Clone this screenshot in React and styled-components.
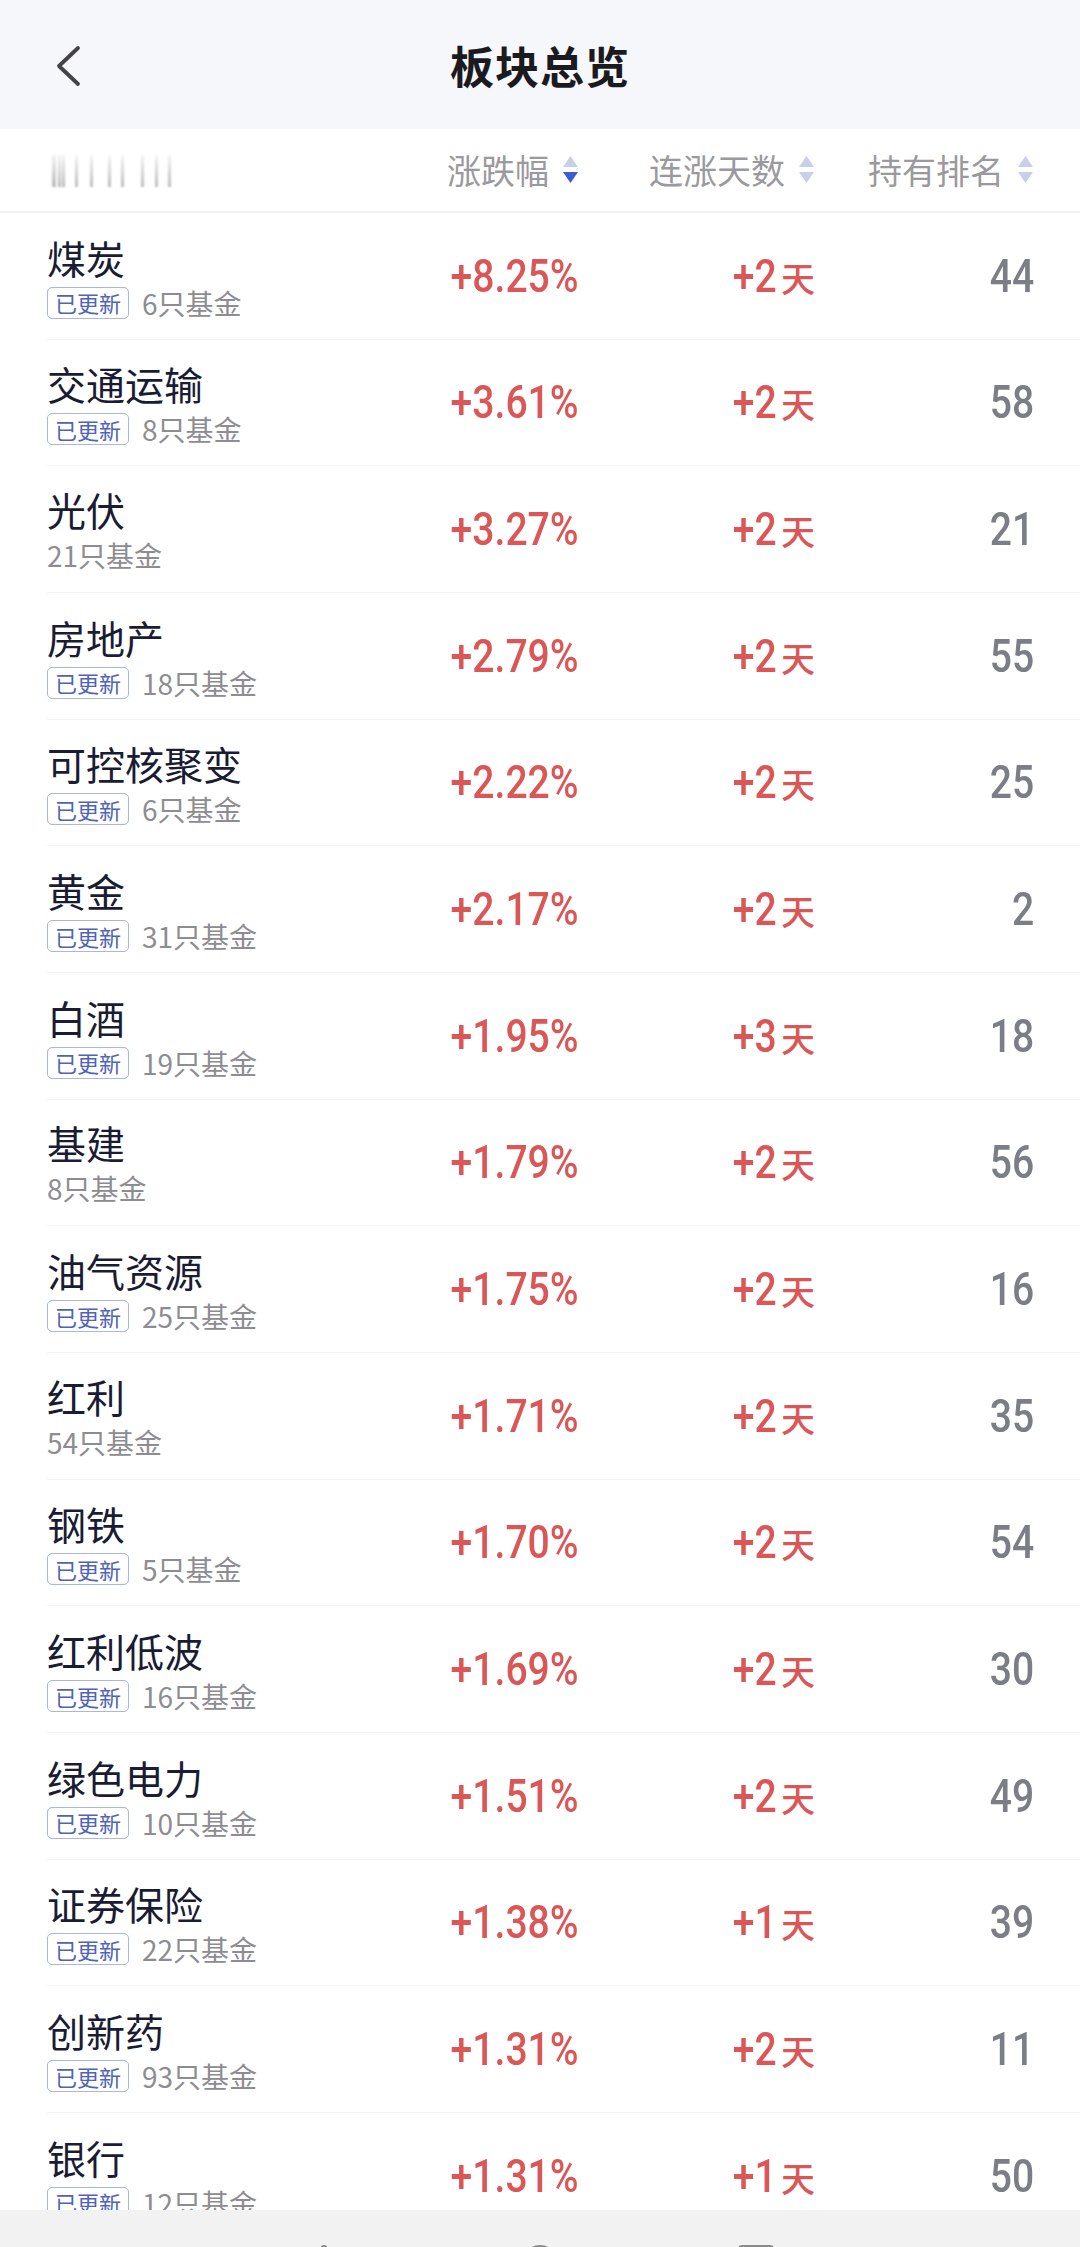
import React from "react";
import styled, { createGlobalStyle } from "styled-components";

const Global = createGlobalStyle`
  html, body { margin: 0; padding: 0; background: #ffffff; }
  body { font-family: "Noto Sans CJK SC", "Noto Sans", sans-serif; }
  * { box-sizing: border-box; }
`;

const Page = styled.div`
  width: 1080px;
  height: 2247px;
  display: flex;
  flex-direction: column;
  overflow: hidden;
  background: #fff;
`;

const TopBar = styled.header`
  height: 129px;
  flex: none;
  background: #f6f7fa;
  display: grid;
  grid-template-columns: 120px 1fr 120px;
  align-items: center;
`;

const BackButton = styled.div`
  padding-left: 56px;
  display: flex;
  align-items: center;
  height: 100%;
  padding-top: 2px;
`;

const Title = styled.h1`
  margin: 0;
  text-align: center;
  font-size: 44px;
  font-weight: 700;
  color: #1b1b1f;
  letter-spacing: 1px;
`;

const GRID = "1fr 200px 236px 219px";

const HeadRow = styled.div`
  flex: none;
  height: 84px;
  display: grid;
  grid-template-columns: ${GRID};
  align-items: center;
  padding: 0 46px 0 50px;
  border-bottom: 2px solid #f0f1f3;
`;

const Blurred = styled.div`
  display: flex;
  align-items: flex-end;
  height: 34px;
  width: 124px;
  filter: blur(0.8px);
`;

const BlurBar = styled.span`
  width: ${(p) => p.w}px;
  margin-left: ${(p) => p.ml}px;
  height: 32px;
  background: linear-gradient(#f4f4f4, #b9b9b9);
`;

const HeadCell = styled.div`
  display: flex;
  justify-content: flex-end;
  align-items: center;
  gap: 13px;
  font-size: 34px;
  color: #9a9a9e;
  line-height: 1;
`;

const SortIcon = styled.svg`
  width: 17px;
  height: 30px;
  flex: none;
`;

const List = styled.div`
  flex: 1;
  overflow: hidden;
`;

const Row = styled.div`
  height: 126.67px;
  display: grid;
  grid-template-columns: ${GRID};
  align-items: center;
  margin-left: 47px;
  padding-right: 46px;
  border-bottom: 1.5px solid #f2f3f5;
`;

const NameCol = styled.div`
  display: flex;
  flex-direction: column;
  justify-content: center;
  gap: 10px;
  padding-top: ${(p) => (p.tag ? 4 : 2)}px;
`;

const Name = styled.div`
  font-size: 39px;
  line-height: 40px;
  color: #191c33;
`;

const Meta = styled.div`
  display: flex;
  align-items: center;
  gap: 13px;
  height: 32px;
`;

const Tag = styled.span`
  height: 32px;
  padding: 0 7px;
  border: 1.5px solid #a7b6e2;
  border-radius: 5px;
  color: #4f64b6;
  font-size: 22px;
  line-height: 29px;
  display: inline-flex;
  align-items: center;
`;

const Count = styled.span`
  font-size: 28px;
  color: #8d8d91;
  line-height: 1;
`;

const ValueCell = styled.div`
  display: flex;
  justify-content: flex-end;
  align-items: baseline;
  color: ${(p) => p.color};
`;

const Num = styled.span`
  display: inline-block;
  font-family: Roboto, "Noto Sans", sans-serif;
  font-size: 46px;
  font-weight: 500;
  line-height: 1;
  transform: scaleX(0.85);
  transform-origin: right center;
  margin-right: ${(p) => p.mr || 0}px;
`;

const Unit = styled.span`
  font-size: 34px;
  font-weight: 500;
  line-height: 1;
`;

const NavBar = styled.div`
  flex: none;
  height: 37px;
  background: #f2f2f3;
  overflow: hidden;
  display: flex;
  justify-content: center;
  gap: 180px;
  padding-top: 35px;
`;

const NavIcon = styled.span`
  width: 36px;
  height: 36px;
  border: 4px solid #8a8a8a;
  border-radius: ${(p) => p.r};
`;

const rows = [
  ["煤炭", true, 6, "+8.25%", "+2", 44],
  ["交通运输", true, 8, "+3.61%", "+2", 58],
  ["光伏", false, 21, "+3.27%", "+2", 21],
  ["房地产", true, 18, "+2.79%", "+2", 55],
  ["可控核聚变", true, 6, "+2.22%", "+2", 25],
  ["黄金", true, 31, "+2.17%", "+2", 2],
  ["白酒", true, 19, "+1.95%", "+3", 18],
  ["基建", false, 8, "+1.79%", "+2", 56],
  ["油气资源", true, 25, "+1.75%", "+2", 16],
  ["红利", false, 54, "+1.71%", "+2", 35],
  ["钢铁", true, 5, "+1.70%", "+2", 54],
  ["红利低波", true, 16, "+1.69%", "+2", 30],
  ["绿色电力", true, 10, "+1.51%", "+2", 49],
  ["证券保险", true, 22, "+1.38%", "+1", 39],
  ["创新药", true, 93, "+1.31%", "+2", 11],
  ["银行", true, 12, "+1.31%", "+1", 50],
];

const RED = "#db5757";
const GRAY = "#7c7e86";

function Sort({ active }) {
  return (
    <SortIcon viewBox="0 0 17 30">
      <path d="M8.5 1 L16 12 L1 12 Z" fill="#c9cfe9" />
      <path d="M1 17 L16 17 L8.5 28 Z" fill={active ? "#3d5cd1" : "#c9cfe9"} />
    </SortIcon>
  );
}

const bars = [
  [4, 2], [3, 2], [3, 1], [3, 10], [3, 12], [3, 15], [3, 10], [3, 17], [3, 11], [3, 10],
];

export default function App() {
  return (
    <Page>
      <Global />
      <TopBar>
        <BackButton>
          <svg width="26" height="42" viewBox="0 0 26 42">
            <polyline
              points="22,3 3,21 22,39"
              fill="none"
              stroke="#444446"
              strokeWidth="3.8"
              strokeLinecap="round"
              strokeLinejoin="round"
            />
          </svg>
        </BackButton>
        <Title>板块总览</Title>
        <div />
      </TopBar>
      <HeadRow>
        <Blurred>
          {bars.map(([w, ml], i) => (
            <BlurBar key={i} w={w} ml={ml} />
          ))}
        </Blurred>
        <HeadCell>
          涨跌幅
          <Sort active />
        </HeadCell>
        <HeadCell>
          连涨天数
          <Sort />
        </HeadCell>
        <HeadCell>
          持有排名
          <Sort />
        </HeadCell>
      </HeadRow>
      <List>
        {rows.map(([name, tag, count, chg, days, rank]) => (
          <Row key={name}>
            <NameCol tag={tag}>
              <Name>{name}</Name>
              <Meta>
                {tag && <Tag>已更新</Tag>}
                <Count>{count}只基金</Count>
              </Meta>
            </NameCol>
            <ValueCell color={RED}>
              <Num>{chg}</Num>
            </ValueCell>
            <ValueCell color={RED}>
              <Num mr={4}>{days}</Num>
              <Unit>天</Unit>
            </ValueCell>
            <ValueCell color={GRAY}>
              <Num>{rank}</Num>
            </ValueCell>
          </Row>
        ))}
      </List>
      <NavBar>
        <NavIcon r="4px 4px 0 0" style={{ transform: "rotate(45deg)", marginTop: 6 }} />
        <NavIcon r="50%" />
        <NavIcon r="4px" />
      </NavBar>
    </Page>
  );
}
